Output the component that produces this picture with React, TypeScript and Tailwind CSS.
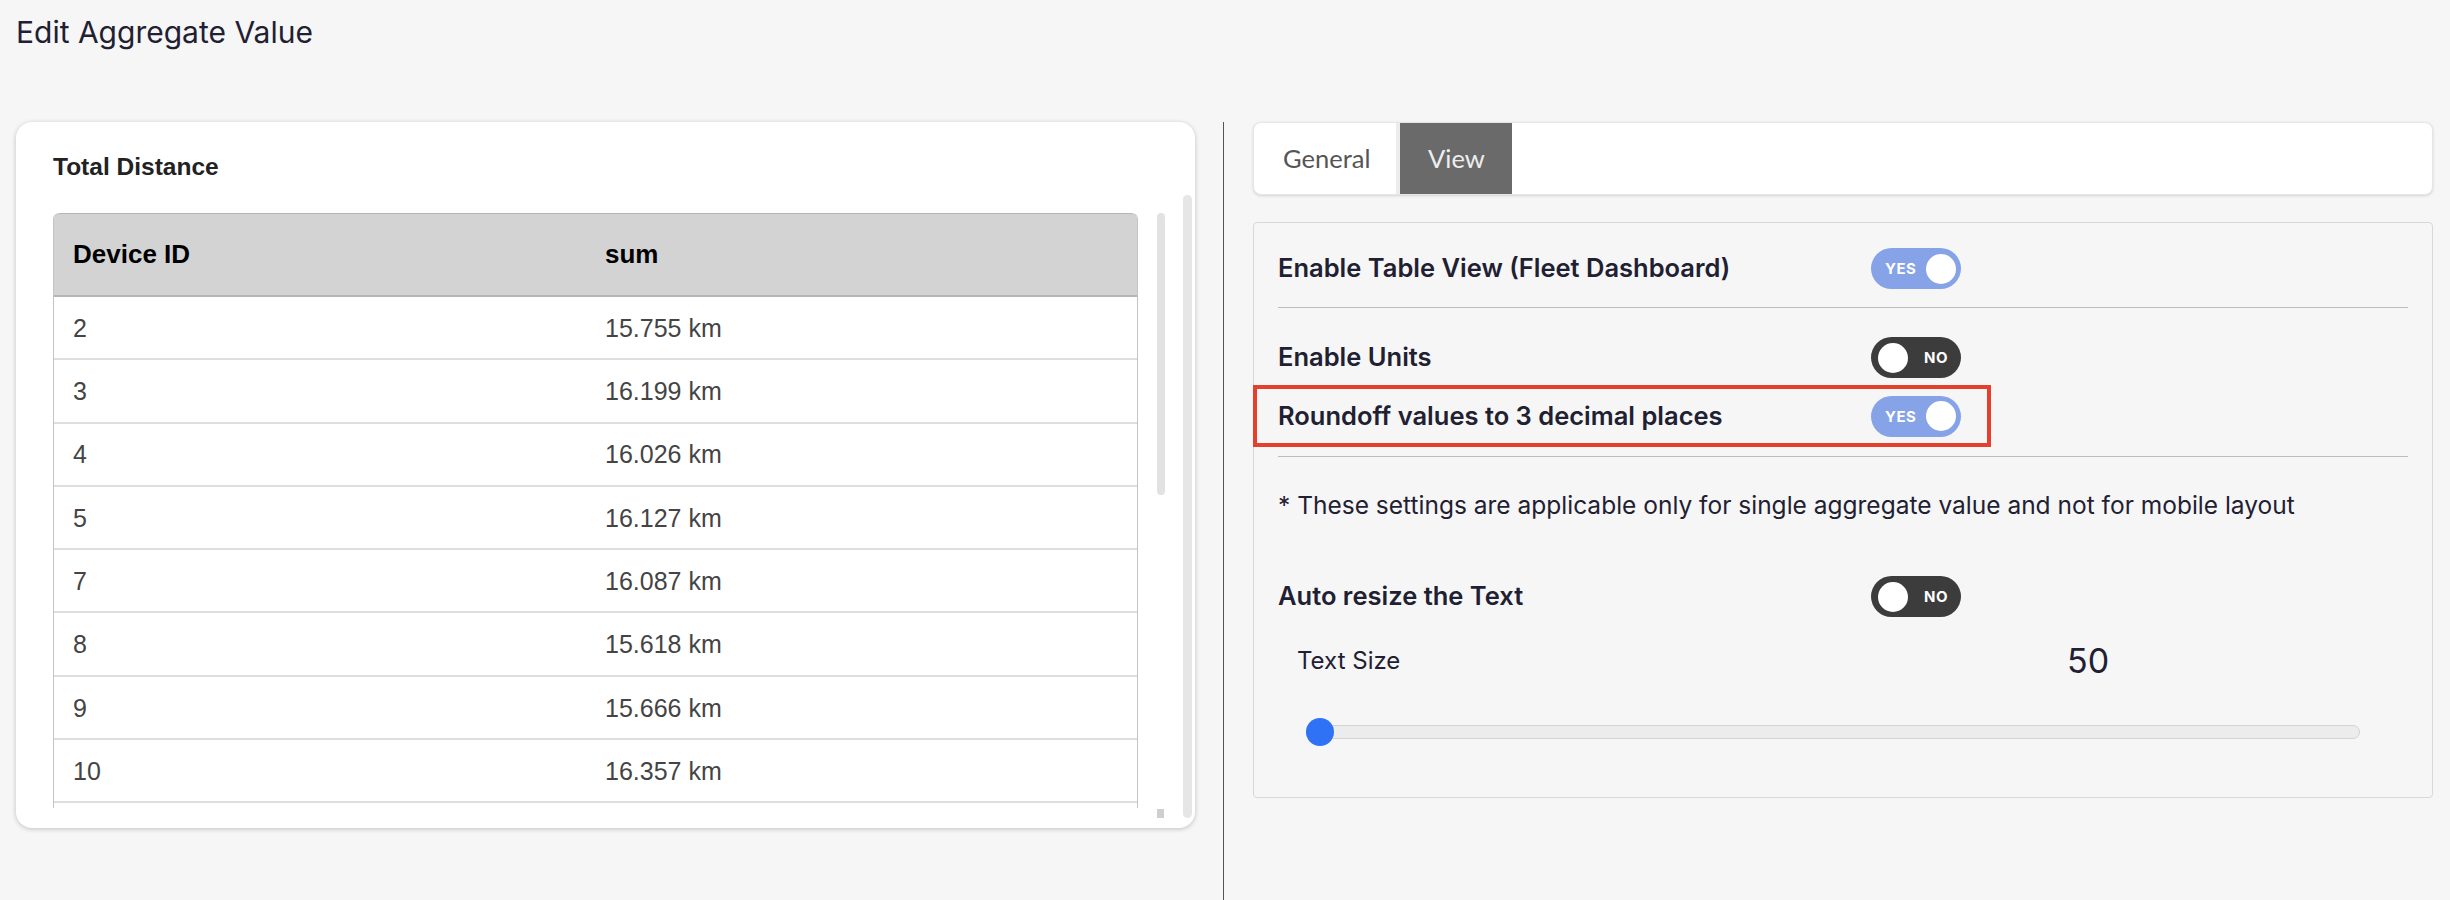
import React from 'react';

const rows: [string, string][] = [
  ['2', '15.755 km'],
  ['3', '16.199 km'],
  ['4', '16.026 km'],
  ['5', '16.127 km'],
  ['7', '16.087 km'],
  ['8', '15.618 km'],
  ['9', '15.666 km'],
  ['10', '16.357 km'],
  ['', ''],
];

function Toggle({ on }: { on: boolean }) {
  if (on) {
    return (
      <div className="w-[90px] h-[41px] rounded-full bg-[#86a3e8] flex items-center justify-between pl-[14px] pr-[5px] shrink-0">
        <span className="text-white font-bold text-[15px] tracking-[0.5px] leading-none">YES</span>
        <span className="w-[30px] h-[30px] rounded-full bg-white" />
      </div>
    );
  }
  return (
    <div className="w-[90px] h-[41px] rounded-full bg-[#3c3c3c] flex items-center justify-between pl-[7px] pr-[13px] shrink-0">
      <span className="w-[30px] h-[30px] rounded-full bg-white" />
      <span className="text-white font-bold text-[15px] tracking-[0.5px] leading-none">NO</span>
    </div>
  );
}

function SettingRow({ label, on }: { label: string; on: boolean }) {
  return (
    <div className="flex items-center h-[41px]">
      <div className="w-[593px] text-[25.5px] font-semibold text-[#1f2133]">{label}</div>
      <Toggle on={on} />
    </div>
  );
}

export default function App() {
  return (
    <div
      className="w-[2450px] h-[900px] bg-[#f6f6f6] overflow-hidden flex flex-col"
      style={{ fontFamily: 'Inter, "Noto Sans", sans-serif' }}
    >
      {/* Page title */}
      <div className="pl-[16px] pt-[14px] h-[122px] text-[30px] leading-[36px] text-[#1f2133]">
        Edit Aggregate Value
      </div>

      <div className="flex flex-1 items-stretch">
        {/* Left preview card */}
        <div className="ml-[16px] w-[1179px] h-[706px] bg-white rounded-[16px] shadow-[0_1px_5px_rgba(0,0,0,0.22)] flex pl-[37px] pr-[3px]">
          <div className="w-[1085px] flex flex-col pt-[31px]">
            <div
              className="text-[24.5px] leading-[28px] font-bold text-[#222]"
              style={{ fontFamily: '"Liberation Sans", Arial, sans-serif' }}
            >
              Total Distance
            </div>
            <div
              className="mt-[32px] h-[595px] overflow-hidden border-x border-[#c4c4c4] rounded-t-[6px]"
              style={{ fontFamily: '"Liberation Sans", Arial, sans-serif' }}
            >
              <div className="h-[84px] bg-[#d3d3d3] border-t border-b-2 border-[#b5b5b5] rounded-t-[6px] flex items-center text-[26px] font-bold text-black">
                <div className="w-[532px] pl-[19px]">Device ID</div>
                <div className="pl-[19px]">sum</div>
              </div>
              {rows.map(([id, sum], i) => (
                <div
                  key={i}
                  className="h-[63.3px] pt-[2px] border-b-2 border-[#dedede] flex items-center text-[25px] text-[#444]"
                >
                  <div className="w-[532px] pl-[19px]">{id}</div>
                  <div className="pl-[19px]">{sum}</div>
                </div>
              ))}
            </div>
          </div>

          {/* inner scrollbar */}
          <div className="ml-[19px] w-[8px] flex flex-col pt-[91px] pb-[10px]">
            <div className="h-[282px] rounded-full bg-[#e2e2e2]" />
            <div className="mt-auto h-[9px] w-[7px] bg-[#cfcfcf]" />
          </div>

          {/* outer scrollbar */}
          <div className="ml-[18px] w-[9px] flex flex-col pt-[73px] pb-[10px]">
            <div className="flex-1 rounded-full bg-[#e6e6e6]" />
          </div>
        </div>

        {/* divider */}
        <div className="ml-[28px] w-px bg-[#555]" />

        {/* Right settings */}
        <div className="ml-[29px] w-[1180px] flex flex-col">
          <div
            className="h-[73px] bg-white rounded-[8px] border border-[#e6e6e6] shadow-[0_1px_3px_rgba(0,0,0,0.14)] flex overflow-hidden"
            style={{ fontFamily: 'Lato, "Noto Sans", sans-serif' }}
          >
            <div className="w-[146px] flex items-center pl-[29px] text-[25.5px] text-[#555] border-r-4 border-[#ececec]">
              General
            </div>
            <div className="w-[112px] flex items-center pl-[28px] text-[25.5px] text-[#eeeeee] bg-[#6a6a6a]">
              View
            </div>
          </div>

          <div className="mt-[27px] h-[576px] border border-[#d8d8d8] rounded-[4px] px-[24px] pt-[25px] flex flex-col">
            <SettingRow label="Enable Table View (Fleet Dashboard)" on />
            <div className="mt-[18px] h-px bg-[#bdbdbd]" />
            <div className="mt-[29px]">
              <SettingRow label="Enable Units" on={false} />
            </div>
            <div className="mt-[7px] -ml-[25px] w-[738px] h-[62px] border-4 border-[#e5402b] pl-[21px] flex items-center">
              <div className="w-[593px] text-[25.5px] font-semibold text-[#1f2133]">
                Roundoff values to 3 decimal places
              </div>
              <Toggle on />
            </div>
            <div className="mt-[9px] h-px bg-[#bdbdbd]" />
            <div className="mt-[32px] text-[24.5px] leading-[32px] text-[#1f2133]">
              * These settings are applicable only for single aggregate value and not for mobile layout
            </div>
            <div className="mt-[55px]">
              <SettingRow label="Auto resize the Text" on={false} />
            </div>
            <div className="mt-[24px] h-[40px] flex items-center pl-[19px]">
              <div className="w-[770px] text-[24px] text-[#1f2133]">Text Size</div>
              <div className="text-[34px] text-[#1f2133] leading-none">50</div>
            </div>
            <div className="mt-[37px] ml-[28px] w-[1054px] h-[28px] relative flex items-center">
              <div className="w-full h-[14px] rounded-full bg-[#ececec] border border-[#d2d2d2]" />
              <div className="absolute left-0 top-0 w-[28px] h-[28px] rounded-full bg-[#2f72f5]" />
            </div>
          </div>
        </div>
      </div>
    </div>
  );
}
